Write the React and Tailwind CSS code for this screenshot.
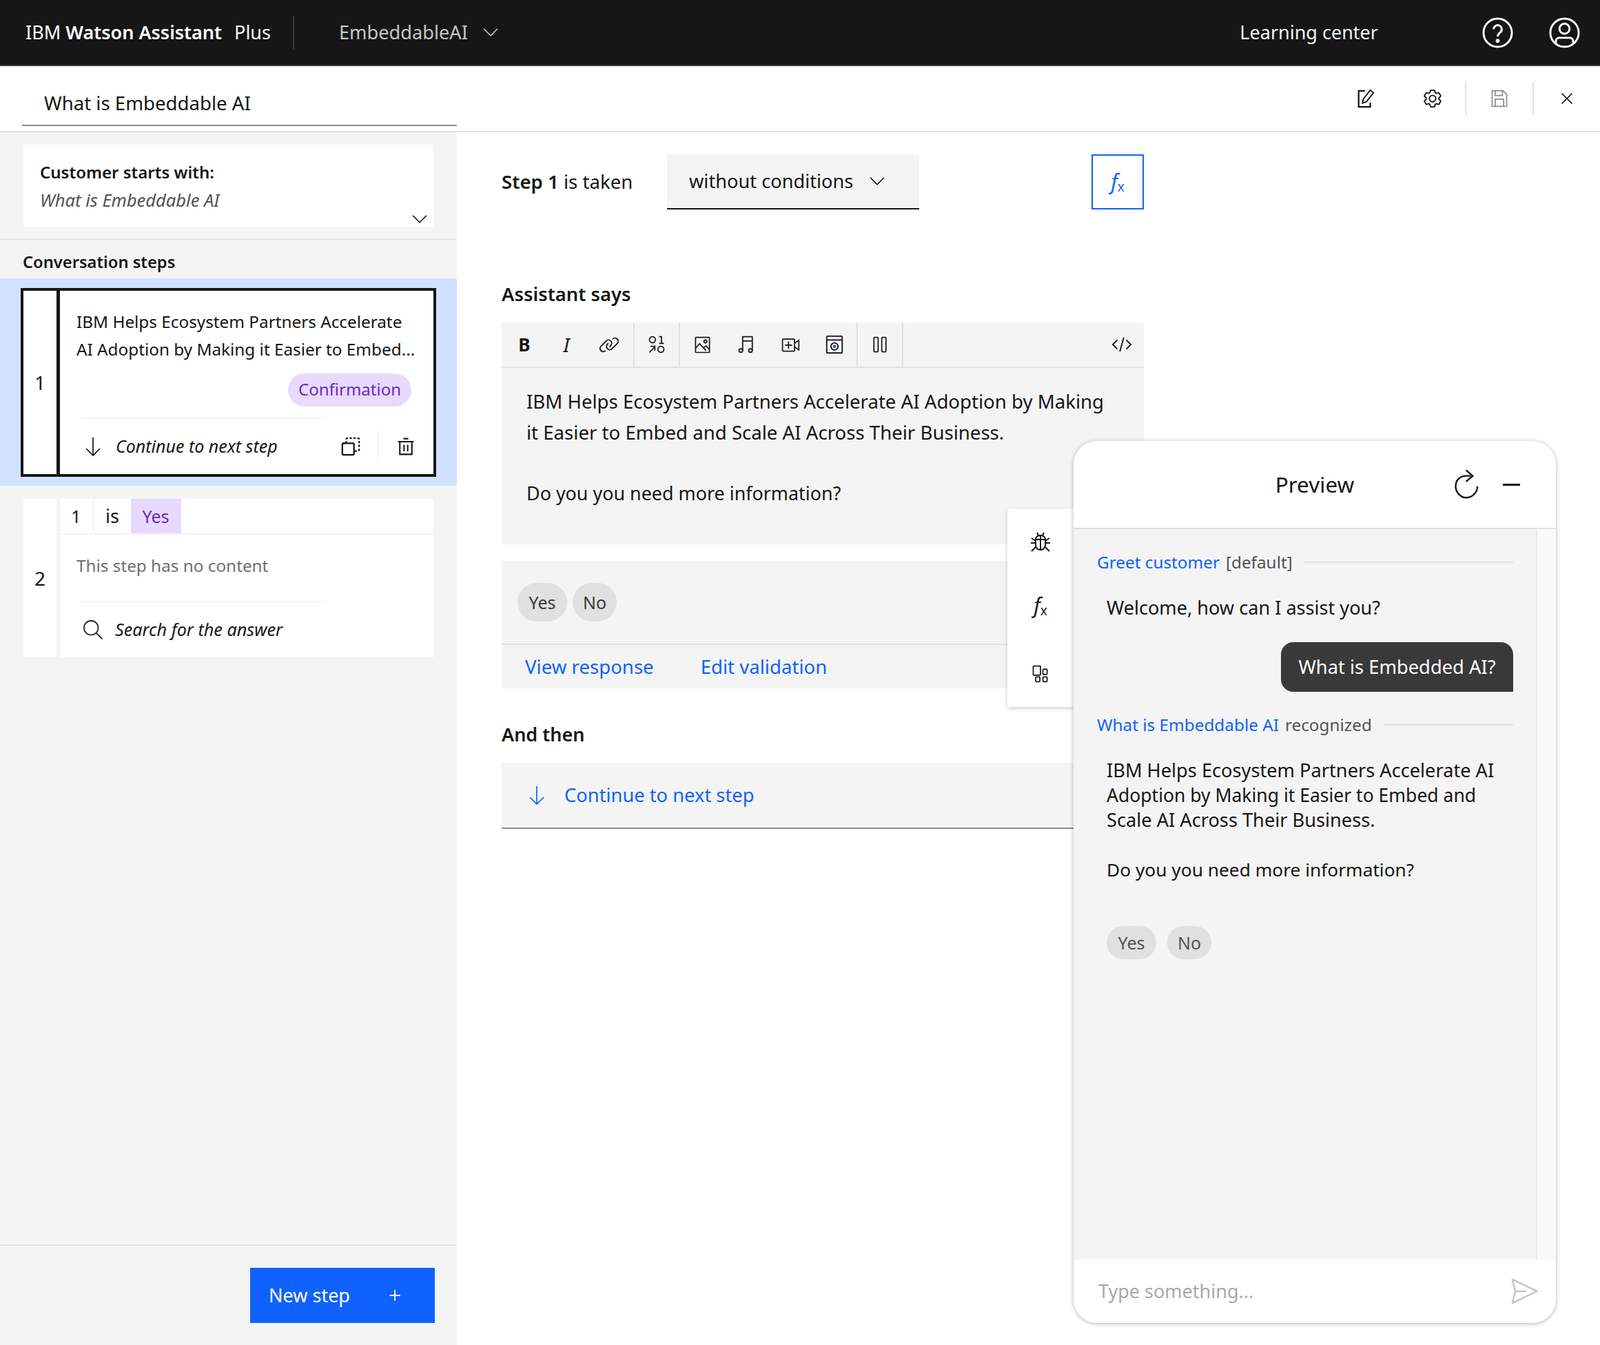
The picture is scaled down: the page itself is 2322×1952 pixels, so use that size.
import { ChevronDown, X, Plus } from 'lucide-react';

const line = { fill: 'none', stroke: 'currentColor', strokeWidth: 2 };

function Svg({ className, children }) {
	return (
		<svg viewBox="0 0 32 32" className={className} {...line}>
			{children}
		</svg>
	);
}

function HelpIcon({ className }) {
	return (
		<Svg className={className}>
			<circle cx="16" cy="16" r="14" />
			<path d="M12 12.5a4 4 0 1 1 6.5 3.2c-1.5 1.1-2.5 1.8-2.5 4" />
			<circle cx="16" cy="24" r="1" fill="currentColor" />
		</Svg>
	);
}

function UserIcon({ className }) {
	return (
		<Svg className={className}>
			<circle cx="16" cy="16" r="14" />
			<circle cx="16" cy="12" r="5" />
			<path d="M7.5 26.5V24a3.5 3.5 0 0 1 3.5-3h10a3.5 3.5 0 0 1 3.5 3v2.5" />
		</Svg>
	);
}

function EditIcon({ className }) {
	return (
		<Svg className={className}>
			<path d="M14 4H4v25h18v-7" strokeWidth="2.4" />
			<path d="M10 23l1-6L22 3l5 4-11 14z" />
		</Svg>
	);
}

function GearIcon({ className }) {
	return (
		<svg viewBox="0 0 32 32" fill="currentColor" className={className}>
			<path d="M27,16.76c0-.25,0-.5,0-.76s0-.51,0-.77l1.92-1.68A2,2,0,0,0,29.3,11L26.94,7a2,2,0,0,0-1.73-1,2,2,0,0,0-.64.1l-2.43.82a11.35,11.35,0,0,0-1.31-.75l-.51-2.52a2,2,0,0,0-2-1.61H13.64a2,2,0,0,0-2,1.61l-.51,2.52a11.48,11.48,0,0,0-1.32.75L7.43,6.06A2,2,0,0,0,6.79,6,2,2,0,0,0,5.06,7L2.7,11a2,2,0,0,0,.41,2.51L5,15.24c0,.25,0,.5,0,.76s0,.51,0,.77L3.11,18.45A2,2,0,0,0,2.7,21L5.06,25a2,2,0,0,0,1.73,1,2,2,0,0,0,.64-.1l2.43-.82a11.35,11.35,0,0,0,1.31.75l.51,2.52a2,2,0,0,0,2,1.61h4.72a2,2,0,0,0,2-1.61l.51-2.52a11.48,11.48,0,0,0,1.32-.75l2.42.82a2,2,0,0,0,.64.1,2,2,0,0,0,1.73-1L29.3,21a2,2,0,0,0-.41-2.51ZM25.21,24l-3.43-1.16a8.86,8.86,0,0,1-2.71,1.57L18.36,28H13.64l-.71-3.55a9.36,9.36,0,0,1-2.7-1.57L6.79,24,4.43,20l2.72-2.4a8.9,8.9,0,0,1,0-3.13L4.43,12,6.79,8l3.43,1.16a8.86,8.86,0,0,1,2.71-1.57L13.64,4h4.72l.71,3.55a9.36,9.36,0,0,1,2.7,1.57L25.21,8,27.57,12l-2.72,2.4a8.9,8.9,0,0,1,0,3.13L27.57,20Z" />
			<path d="M16,22a6,6,0,1,1,6-6A5.94,5.94,0,0,1,16,22Zm0-10a3.91,3.91,0,0,0-4,4,3.91,3.91,0,0,0,4,4,3.91,3.91,0,0,0,4-4A3.91,3.91,0,0,0,16,12Z" />
		</svg>
	);
}

function SaveIcon({ className }) {
	return (
		<Svg className={className}>
			<path d="M4 3h18l6 6v20H4z" />
			<path d="M9 29V17h14v12M9 3v8h12V3" />
		</Svg>
	);
}

function ArrowIcon({ className }) {
	return (
		<Svg className={className}>
			<path d="M16 3v26M6 19l10 10 10-10" strokeWidth="1.7" />
		</Svg>
	);
}

function SearchIcon({ className }) {
	return (
		<Svg className={className}>
			<circle cx="13" cy="13" r="11" strokeWidth="1.7" />
			<path d="M21 21l9.5 9.5" strokeWidth="1.7" />
		</Svg>
	);
}

function FxLabel({ className }) {
	return (
		<span className={`flex items-end leading-none ${className}`}>
			<span className="font-['Liberation_Serif',serif] italic text-[30px]">f</span>
			<span className="text-[19px] mb-[-2px]">x</span>
		</span>
	);
}

function LinkIcon({ className }) {
	return (
		<svg viewBox="0 0 32 32" fill="currentColor" className={className}>
			<path d="M29.25,6.76a6,6,0,0,0-8.5,0l1.42,1.42a4,4,0,1,1,5.67,5.67l-8,8a4,4,0,1,1-5.67-5.66l1.41-1.42-1.41-1.42-1.42,1.42a6,6,0,0,0,0,8.5A6,6,0,0,0,17,25a6,6,0,0,0,4.27-1.76l8-8A6,6,0,0,0,29.25,6.76Z" />
			<path d="M4.19,24.82a4,4,0,0,1,0-5.67l8-8a4,4,0,0,1,5.67,0A3.94,3.94,0,0,1,19,14a4,4,0,0,1-1.17,2.85L15.71,19l1.42,1.42,2.12-2.12a6,6,0,0,0-8.51-8.51l-8,8a6,6,0,0,0,0,8.51A6,6,0,0,0,7,28a6.07,6.07,0,0,0,4.28-1.76L9.86,24.82A4,4,0,0,1,4.19,24.82Z" />
		</svg>
	);
}

function VariableIcon({ className }) {
	return (
		<Svg className={className}>
			<circle cx="9" cy="8" r="5" />
			<path d="M20 3h4v11M20 14h8" />
			<path d="M4 29L13 20M6 19h7v7" />
			<circle cx="23" cy="24" r="5" />
		</Svg>
	);
}

function ImageIcon({ className }) {
	return (
		<Svg className={className}>
			<rect x="4" y="3" width="24" height="26" rx="1" />
			<circle cx="21" cy="10" r="2.5" />
			<path d="M4 22l7-8 11 12M18 21l4-3 6 6" />
		</Svg>
	);
}

function MusicIcon({ className }) {
	return (
		<Svg className={className}>
			<circle cx="7" cy="26" r="3" />
			<circle cx="23" cy="26" r="3" />
			<path d="M10 26V3h16v23M10 10h16" />
		</Svg>
	);
}

function VideoIcon({ className }) {
	return (
		<Svg className={className}>
			<rect x="3" y="7" width="20" height="20" rx="1" />
			<path d="M23 14l7-5v16l-7-5M13 11v12M7 17h12" />
		</Svg>
	);
}

function PreviewIcon({ className }) {
	return (
		<Svg className={className}>
			<rect x="4" y="3" width="24" height="26" rx="1" />
			<path d="M4 9h24" />
			<circle cx="16" cy="19" r="5.5" />
			<circle cx="16" cy="19" r="2.5" fill="#0f62fe" stroke="none" />
		</Svg>
	);
}

function ColumnsIcon({ className }) {
	return (
		<Svg className={className}>
			<rect x="6" y="4" width="7" height="24" rx="1.5" />
			<rect x="19" y="4" width="7" height="24" rx="1.5" />
		</Svg>
	);
}

function CodeIcon({ className }) {
	return (
		<Svg className={className}>
			<path d="M9 9l-7 7 7 7M23 9l7 7-7 7M13 27l6-22" />
		</Svg>
	);
}

function CopyIcon({ className }) {
	return (
		<Svg className={className}>
			<path d="M21 11v16a2 2 0 0 1-2 2H5a2 2 0 0 1-2-2V13a2 2 0 0 1 2-2h2" strokeWidth="2.4" />
			<path d="M3 11h18" strokeWidth="2.4" />
			<path d="M9 11V5a2 2 0 0 1 2-2h16a2 2 0 0 1 2 2v16a2 2 0 0 1-2 2h-6" strokeDasharray="3.5 2.5" strokeWidth="2.4" />
		</Svg>
	);
}

function TrashIcon({ className }) {
	return (
		<Svg className={className}>
			<path d="M3 8h26M6 8v21h20V8M12 3h8M13 13v11M19 13v11" strokeWidth="2.4" />
		</Svg>
	);
}

function BugIcon({ className }) {
	return (
		<Svg className={className}>
			<path d="M9 14c0-5 3-7 7-7s7 2 7 7v7c0 4-3 7-7 7s-7-3-7-7z" />
			<path d="M16 7v21M9 13h14M11 3l2 4M21 3l-2 4M3 11l6 4M29 11l-6 4M2 18h7M30 18h-7M3 30l7-7M29 30l-7-7" />
		</Svg>
	);
}

function AppsIcon({ className }) {
	return (
		<Svg className={className}>
			<rect x="4" y="3" width="12" height="15" rx="1" />
			<rect x="20" y="8" width="7" height="9" rx="1.5" />
			<rect x="8" y="21" width="7" height="8" rx="1.5" />
			<rect x="20" y="21" width="7" height="8" rx="1.5" />
		</Svg>
	);
}

function RefreshIcon({ className }) {
	return (
		<Svg className={className}>
			<path d="M20 7H15C8 7 4 12 4 18s5 12 11 12 12-5 12-12" strokeWidth="1.8" />
			<path d="M15 1l7 6-7 6" strokeWidth="1.8" />
		</Svg>
	);
}

function SendIcon({ className }) {
	return (
		<Svg className={className}>
			<path d="M3 3l27 13L3 29l3-13z" strokeLinejoin="round" />
			<path d="M6 16h12" />
		</Svg>
	);
}

function Header() {
	return (
		<header className="h-[96px] bg-[#161616] border-b-2 border-[#393939] flex items-center text-[27px] text-white">
			<div className="pl-[37px] w-[425px] flex items-center whitespace-nowrap">
				<span>IBM&nbsp;</span>
				<span className="font-semibold">Watson Assistant</span>
				<span className="ml-[18px] text-[#f4f4f4]">Plus</span>
			</div>
			<div className="w-[2px] h-[48px] bg-[#393939]" />
			<div className="ml-[65px] flex items-center text-[#c6c6c6] text-[27.2px]">
				EmbeddableAI
				<ChevronDown className="ml-[14px] w-[38px] h-[38px]" strokeWidth={1.1} />
			</div>
			<div className="ml-auto text-[#f4f4f4]">Learning center</div>
			<HelpIcon className="ml-[150px] w-[47px] h-[47px]" />
			<UserIcon className="ml-[50px] mr-[28px] w-[47px] h-[47px]" />
		</header>
	);
}

function TitleBar() {
	return (
		<div className="h-[96px] border-b-2 border-[#e0e0e0] flex text-[#161616]">
			<div className="pl-[32px] w-[663px]">
				<div className="h-[87px] pl-[32px] pt-[33px] border-b-2 border-[#8d8d8d] text-[27.6px] leading-[40px]">What is Embeddable AI</div>
			</div>
			<div className="flex-1 flex justify-end items-center">
				<div className="w-[97px] flex justify-center">
					<EditIcon className="w-[30px] h-[30px]" />
				</div>
				<div className="w-[97px] h-[48px] flex justify-center items-center border-r-2 border-[#e0e0e0]">
					<GearIcon className="w-[30px] h-[30px]" />
				</div>
				<div className="w-[98px] h-[48px] flex justify-center items-center border-r-2 border-[#e0e0e0] text-[#8d8d8d]">
					<SaveIcon className="w-[28px] h-[28px]" />
				</div>
				<div className="w-[96px] flex justify-center">
					<X className="w-[28px] h-[28px]" strokeWidth={1.5} />
				</div>
			</div>
		</div>
	);
}

function Sidebar() {
	return (
		<aside className="w-[663px] h-[1760px] shrink-0 bg-[#f4f4f4] flex flex-col text-[#161616]">
			<div className="ml-[34px] mt-[18px] w-[595px] h-[120px] bg-white pl-[24px] pt-[20px] relative leading-[40px]">
				<div className="font-semibold text-[24px]">Customer starts with:</div>
				<div className="italic text-[#525252] text-[25.5px]">What is Embeddable AI</div>
				<ChevronDown className="absolute right-[1px] top-[89px] w-[38px] h-[38px]" strokeWidth={1.1} />
			</div>
			<div className="mt-[16px] h-[2px] bg-[#e0e0e0]" />
			<div className="h-[56px] pl-[33px] pt-[14px] text-[23.7px] leading-[36px] font-semibold">Conversation steps</div>

			<div className="h-[301px] bg-[#d0e2ff] pt-[14px] pl-[30px]">
				<div className="w-[603px] h-[274px] border-4 border-[#161616] bg-white flex text-[25px]">
					<div className="w-[48px] flex items-center justify-center border-r-[5px] border-[#161616] box-content text-[28px]">1</div>
					<div className="flex-1">
						<div className="pl-[24px] pt-[25px] leading-[40px] whitespace-nowrap text-[24.3px]">
							<div>IBM Helps Ecosystem Partners Accelerate</div>
							<div>AI Adoption by Making it Easier to Embed...</div>
						</div>
						<div className="mt-[15px] pr-[32px] flex justify-end">
							<span className="w-[179px] h-[48px] rounded-full bg-[#e8daff] text-[#6929c4] leading-[46px] text-center text-[24px]">Confirmation</span>
						</div>
						<div className="ml-[31px] mt-[16px] w-[355px] h-[2px] bg-[#f4f4f4]" />
						<div className="h-[80px] flex items-center pl-[32px]">
							<ArrowIcon className="w-[32px] h-[32px]" />
							<span className="ml-[17px] italic">Continue to next step</span>
							<CopyIcon className="ml-auto w-[30px] h-[30px]" />
							<div className="ml-[24px] w-[2px] h-[46px] bg-[#f4f4f4]" />
							<TrashIcon className="ml-[25px] mr-[26px] w-[28px] h-[30px]" />
						</div>
					</div>
				</div>
			</div>

			<div className="ml-[34px] mt-[19px] w-[595px] h-[230px] bg-white flex text-[25px]">
				<div className="w-[48px] flex items-center justify-center text-[28px]">2</div>
				<div className="flex-1 border-l-[5px] border-[#f4f4f4]">
					<div className="h-[52px] flex border-b-2 border-[#f4f4f4] leading-[50px]">
						<span className="w-[49px] text-center border-r-2 border-[#f4f4f4]">1</span>
						<span className="w-[54px] text-center text-[27px]">is</span>
						<span className="w-[74px] text-center bg-[#e8daff] text-[#6929c4] border-r-2 border-[#f4f4f4]">Yes</span>
					</div>
					<div className="pl-[24px] pt-[25px] h-[96px] leading-[40px] text-[#6f6f6f] text-[24.3px]">This step has no content</div>
					<div className="ml-[31px] w-[355px] h-[2px] bg-[#f4f4f4]" />
					<div className="h-[80px] flex items-center pl-[33px]">
						<SearchIcon className="w-[30px] h-[30px]" />
						<span className="ml-[17px] italic text-[25.2px]">Search for the answer</span>
					</div>
				</div>
			</div>

			<div className="mt-auto h-[146px] border-t-2 border-[#e0e0e0] pt-[32px] pl-[363px]">
				<button className="w-[268px] h-[80px] bg-[#0f62fe] text-white text-[27px] flex items-center pl-[27px]">
					New step
					<Plus className="ml-auto mr-[46px] w-[24px] h-[24px]" strokeWidth={1.8} />
				</button>
			</div>
		</aside>
	);
}

function ToolButton({ children, className }) {
	return <div className={`flex items-center justify-center h-full ${className}`}>{children}</div>;
}

function Toolbar() {
	return (
		<div className="h-[66px] bg-[#f4f4f4] border-b-2 border-[#e0e0e0] flex text-[#161616]">
			<div className="w-[193px] border-r-2 border-[#e0e0e0] flex items-center pl-[3px]">
				<ToolButton className="w-[60px]">
					<span className="text-[26px] font-bold">B</span>
				</ToolButton>
				<ToolButton className="w-[62px]">
					<span className="text-[28px] italic font-['Liberation_Serif',serif]">I</span>
				</ToolButton>
				<ToolButton className="w-[62px]">
					<LinkIcon className="w-[30px] h-[30px]" />
				</ToolButton>
			</div>
			<ToolButton className="w-[66px] border-r-2 border-[#e0e0e0]">
				<VariableIcon className="w-[28px] h-[28px]" />
			</ToolButton>
			<div className="w-[258px] border-r-2 border-[#e0e0e0] flex items-center">
				<ToolButton className="w-[64px]">
					<ImageIcon className="w-[27px] h-[27px]" />
				</ToolButton>
				<ToolButton className="w-[64px]">
					<MusicIcon className="w-[28px] h-[28px]" />
				</ToolButton>
				<ToolButton className="w-[64px]">
					<VideoIcon className="w-[28px] h-[28px]" />
				</ToolButton>
				<ToolButton className="w-[64px]">
					<PreviewIcon className="w-[30px] h-[30px]" />
				</ToolButton>
			</div>
			<ToolButton className="w-[66px] border-r-2 border-[#e0e0e0]">
				<ColumnsIcon className="w-[28px] h-[28px]" />
			</ToolButton>
			<ToolButton className="ml-auto mr-[17px] w-[30px]">
				<CodeIcon className="w-[30px] h-[30px]" />
			</ToolButton>
		</div>
	);
}

function Editor() {
	return (
		<main className="flex-1 pl-[65px] text-[#161616]">
			<div className="w-[932px]">
				<div className="mt-[32px] h-[80px] flex items-center text-[27.6px]">
					<span className="w-[240px]">
						<span className="font-semibold">Step 1</span> is taken
					</span>
					<div className="w-[366px] h-[80px] bg-[#f4f4f4] border-b-2 border-[#161616] flex items-center pl-[32px] text-[27.2px]">
						without conditions
						<ChevronDown className="ml-[16px] w-[38px] h-[38px]" strokeWidth={1.1} />
					</div>
					<div className="ml-auto w-[76px] h-[80px] border-2 border-[#0f62fe] text-[#0f62fe] flex items-center justify-center">
						<FxLabel />
					</div>
				</div>

				<div className="mt-[105px] text-[27.4px] leading-[36px] font-semibold">Assistant says</div>
				<div className="mt-[23px]">
					<Toolbar />
				</div>
				<div className="h-[256px] bg-[#f4f4f4] pl-[36px] pt-[26px] text-[27.6px] leading-[44.5px]">
					<div>IBM Helps Ecosystem Partners Accelerate AI Adoption by Making</div>
					<div>it Easier to Embed and Scale AI Across Their Business.</div>
					<div className="mt-[44.5px] text-[26.9px]">Do you you need more information?</div>
				</div>

				<div className="mt-[24px] bg-[#f4f4f4]">
					<div className="h-[122px] pt-[32px] pl-[23px] flex gap-[8px] items-start border-b-2 border-[#e0e0e0] text-[25px]">
						<span className="w-[72px] h-[56px] rounded-full bg-[#e0e0e0] text-center leading-[56px] text-[#393939]">Yes</span>
						<span className="w-[64px] h-[56px] rounded-full bg-[#e0e0e0] text-center leading-[56px] text-[#393939]">No</span>
					</div>
					<div className="h-[63px] flex items-center pl-[34px] gap-[68px] text-[27.6px] text-[#0f62fe]">
						<span>View response</span>
						<span>Edit validation</span>
					</div>
				</div>

				<div className="mt-[49px] text-[27px] leading-[36px] font-semibold">And then</div>
				<div className="mt-[23px] h-[96px] bg-[#f4f4f4] border-b-2 border-[#8d8d8d] flex items-center pl-[35px] text-[27.3px] text-[#0f62fe]">
					<ArrowIcon className="w-[32px] h-[32px]" />
					<span className="ml-[24px]">Continue to next step</span>
				</div>
			</div>
		</main>
	);
}

function SideTools() {
	return (
		<div className="absolute left-[1462px] top-[738px] w-[96px] h-[288px] bg-white shadow-[0_2px_6px_rgba(0,0,0,0.2)] grid grid-rows-3 justify-items-center items-center text-[#161616]">
			<BugIcon className="w-[32px] h-[32px]" />
			<FxLabel className="mb-[6px]" />
			<AppsIcon className="w-[28px] h-[28px]" />
		</div>
	);
}

function SectionLabel({ name, note, lineWidth }) {
	return (
		<div className="flex items-center text-[24.3px] leading-[36px] whitespace-nowrap">
			<span className="text-[#0f62fe]">{name}</span>
			<span className="ml-[9px] text-[#525252]">{note}</span>
			<div className="ml-auto h-[2px] bg-[#e0e0e0]" style={{ width: lineWidth }} />
		</div>
	);
}

function Preview() {
	return (
		<div className="absolute left-[1558px] top-[640px] w-[700px] h-[1280px] bg-white rounded-[34px] overflow-hidden shadow-[0_1px_6px_rgba(0,0,0,0.3)] flex flex-col text-[#161616]">
			<div className="h-[128px] shrink-0 border-b-2 border-[#e0e0e0] grid grid-cols-[1fr_auto_1fr] items-center">
				<div />
				<div className="text-[31.5px]">Preview</div>
				<div className="flex items-center justify-end pr-[52px]">
					<RefreshIcon className="w-[44px] h-[44px]" />
					<div className="ml-[30px] w-[25px] h-[3px] bg-[#161616]" />
				</div>
			</div>
			<div className="flex-1 flex min-h-0">
				<div className="flex-1 bg-[#f4f4f4] pl-[34px] pr-[33px] pt-[30px]">
					<SectionLabel name="Greet customer" note="[default]" lineWidth={304} />
					<div className="mt-[30px] pl-[14px] text-[27.1px] leading-[36px]">Welcome, how can I assist you?</div>
					<div className="mt-[32px] flex justify-end">
						<div className="w-[337px] h-[72px] text-center bg-[#393939] text-white text-[27.3px] leading-[72px] rounded-t-[18px] rounded-bl-[18px]">What is Embedded AI?</div>
					</div>
					<div className="mt-[30px]">
						<SectionLabel name="What is Embeddable AI" note="recognized" lineWidth={188} />
					</div>
					<div className="mt-[30px] pl-[14px] text-[27.2px] leading-[36px]">
						<div>IBM Helps Ecosystem Partners Accelerate AI</div>
						<div className="text-[26.5px]">Adoption by Making it Easier to Embed and</div>
						<div>Scale AI Across Their Business.</div>
						<div className="mt-[36px] text-[26.3px]">Do you you need more information?</div>
					</div>
					<div className="mt-[64px] pl-[14px] flex gap-[16px] text-[25px]">
						<span className="w-[72px] h-[48px] rounded-full bg-[#e0e0e0] text-center leading-[48px] text-[#525252]">Yes</span>
						<span className="w-[64px] h-[48px] rounded-full bg-[#e0e0e0] text-center leading-[48px] text-[#525252]">No</span>
					</div>
				</div>
				<div className="w-[29px] bg-[#fafafa] border-l-2 border-[#e8e8e8]" />
			</div>
			<div className="h-[92px] shrink-0 flex items-center pl-[36px] pr-[25px] text-[27px] text-[#a8a8a8]">
				Type something...
				<SendIcon className="ml-auto w-[42px] h-[42px] text-[#c6c6c6]" />
			</div>
		</div>
	);
}

export default function App() {
	return (
		<div className="relative w-[2322px] h-[1952px] bg-white overflow-hidden font-['Noto_Sans',sans-serif]">
			<Header />
			<TitleBar />
			<div className="flex">
				<Sidebar />
				<Editor />
			</div>
			<SideTools />
			<Preview />
		</div>
	);
}
